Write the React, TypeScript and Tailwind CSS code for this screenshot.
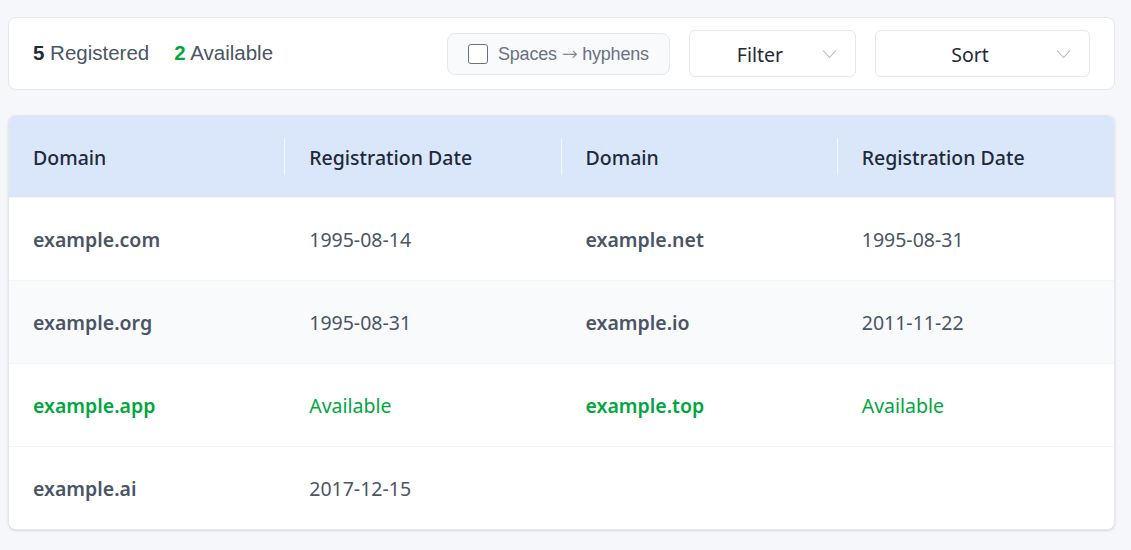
import React, { useState } from 'react';

type Row = { domain: string; date: string | null };

const rows: Row[][] = [
  [{ domain: 'example.com', date: '1995-08-14' }, { domain: 'example.net', date: '1995-08-31' }],
  [{ domain: 'example.org', date: '1995-08-31' }, { domain: 'example.io', date: '2011-11-22' }],
  [{ domain: 'example.app', date: null }, { domain: 'example.top', date: null }],
  [{ domain: 'example.ai', date: '2017-12-15' }],
];

const Chevron: React.FC = () => (
  <svg width="15" height="10" viewBox="0 0 15 10" fill="none" className="text-[#b4b9c1]">
    <path d="M1 1.5l6.5 7 6.5-7" stroke="currentColor" strokeWidth="1.1" />
  </svg>
);

const Select: React.FC<{ label: string; width: string }> = ({ label, width }) => (
  <button
    className={`${width} h-[47px] bg-white border border-gray-200 rounded-md flex items-center pl-3 pr-[18px] text-[19.5px] text-gray-800 font-['Noto_Sans',sans-serif]`}
  >
    <span className="flex-1 text-center pt-[3px]">{label}</span>
    <span className="ml-1">
      <Chevron />
    </span>
  </button>
);

const HeaderCell: React.FC<{ label: string; divider?: boolean }> = ({ label, divider }) => (
  <div className="flex items-center justify-between pl-6 h-[81px]">
    <span className="pt-[3px]">{label}</span>
    {divider && <span className="w-px h-[37px] bg-white/70"></span>}
  </div>
);

const Cell: React.FC<{ row?: Row }> = ({ row }) => {
  if (!row) return <><div className="h-[82px]"></div><div className="h-[82px]"></div></>;
  const available = row.date === null;
  return (
    <>
      <div className={`h-[82px] flex items-center px-6 pt-[2px] font-semibold ${available ? 'text-green-600' : 'text-gray-600'}`}>
        {row.domain}
      </div>
      <div className={`h-[82px] flex items-center px-6 pt-[2px] ${available ? 'text-green-600' : 'text-gray-600'}`}>
        {row.date ?? 'Available'}
      </div>
    </>
  );
};

const App: React.FC = () => {
  const [hyphens, setHyphens] = useState(false);

  return (
    <div className="min-h-[550px] bg-[#f5f7fa] pl-2 pr-4 pt-[17px] pb-6">
      <div className="bg-white border border-gray-200 rounded-lg h-[73px] flex items-center justify-between pl-6 pr-6 font-['Liberation_Sans',Arial,sans-serif]">
        <div className="flex items-center gap-[25px] text-[20.5px] text-gray-600">
          <span>
            <b className="text-gray-800">5</b> Registered
          </span>
          <span>
            <b className="text-green-600">2</b> Available
          </span>
        </div>
        <div className="flex items-center gap-[19px]">
          <label className="w-[223px] h-[42px] bg-[#f8fafc] border border-gray-200 rounded-lg flex items-center gap-[10px] pl-5 cursor-pointer">
            <span
              onClick={() => setHyphens(!hyphens)}
              className={`w-5 h-5 shrink-0 rounded-[3px] border-[1.5px] border-gray-500 ${hyphens ? 'bg-blue-600' : 'bg-white'}`}
            ></span>
            <span className="text-[18px] text-gray-500 tracking-[-0.2px] whitespace-nowrap">
              Spaces <span className="font-['DejaVu_Sans',sans-serif] text-[19px] font-light">→</span> hyphens
            </span>
          </label>
          <Select label="Filter" width="w-[167px]" />
          <Select label="Sort" width="w-[215px]" />
        </div>
      </div>

      <div className="mt-[25px] bg-white border border-gray-200 rounded-lg overflow-hidden shadow-sm font-['Noto_Sans',sans-serif] text-[19.5px]">
        <div className="grid grid-cols-4 bg-[#dae7fb] text-gray-800 font-medium">
          <HeaderCell label="Domain" divider />
          <HeaderCell label="Registration Date" divider />
          <HeaderCell label="Domain" divider />
          <HeaderCell label="Registration Date" />
        </div>
        {rows.map((pair, i) => (
          <div key={i} className={`grid grid-cols-4 border-t border-gray-100 ${i === 1 ? 'bg-[#f9fafb]' : 'bg-white'}`}>
            <Cell row={pair[0]} />
            <Cell row={pair[1]} />
          </div>
        ))}
      </div>
    </div>
  );
};

export default App;
